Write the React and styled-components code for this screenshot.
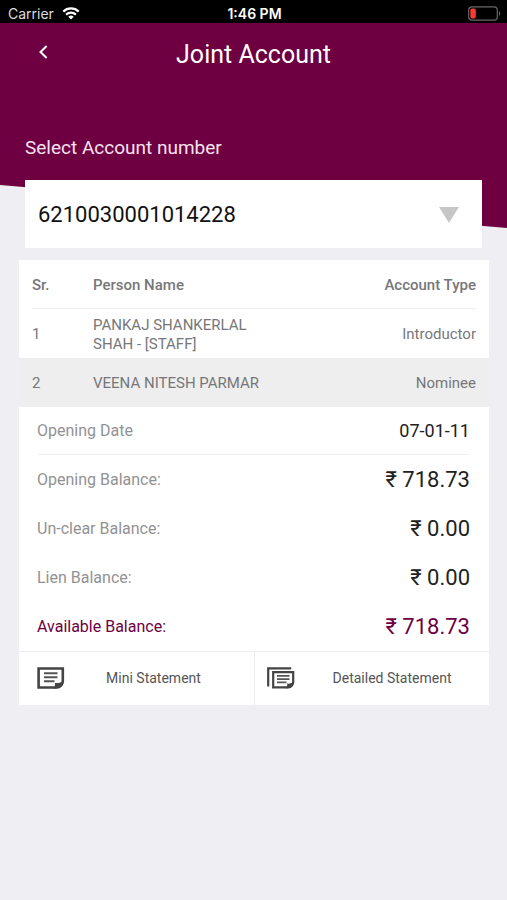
import React from "react";
import styled, { createGlobalStyle } from "styled-components";

const ACCOUNTS = ["6210030001014228"];

const HOLDERS = [
  { sr: 1, name: "PANKAJ SHANKERLAL SHAH - [STAFF]", type: "Introductor" },
  { sr: 2, name: "VEENA NITESH PARMAR", type: "Nominee" },
];

const BALANCES = [
  { label: "Opening Balance:", value: "₹ 718.73" },
  { label: "Un-clear Balance:", value: "₹ 0.00" },
  { label: "Lien Balance:", value: "₹ 0.00" },
  { label: "Available Balance:", value: "₹ 718.73", highlight: true },
];

const WifiIcon = () => (
  <svg width="18" height="13" viewBox="0 0 18 13" fill="none" stroke="#fff">
    <path d="M1.3 4.6a11 11 0 0 1 15.4 0" strokeWidth="2.2" />
    <path d="M4.1 7.6a7 7 0 0 1 9.8 0" strokeWidth="2.2" />
    <path d="M9 12.6 6.3 9.8a3.9 3.9 0 0 1 5.4 0z" fill="#fff" stroke="none" />
  </svg>
);

const BatteryIcon = () => (
  <svg width="33" height="15" viewBox="0 0 33 15" fill="none">
    <rect x="0.7" y="0.9" width="28.6" height="13.2" rx="3.4" stroke="#6b6667" strokeWidth="1.2" />
    <rect x="2.4" y="2.6" width="5.4" height="9.8" rx="1.6" fill="#fb3b30" />
    <path d="M31 5.2c1.6.6 1.6 4 0 4.6z" fill="#6b6667" />
  </svg>
);

const BackIcon = () => (
  <svg width="9" height="14" viewBox="0 0 9 14" fill="none">
    <path d="M7.6 1 1.5 7l6.1 6" stroke="#fff" strokeWidth="2" />
  </svg>
);

const MiniStatementIcon = () => (
  <svg width="28" height="22" viewBox="0 0 28 22" fill="none">
    <path d="M1.6 1.5h24.2v12.6c0 3.6-2.6 6.4-6.2 6.4h-18z" stroke="#444" strokeWidth="2.6" />
    <path d="M16 21.4c1.8-1.2 2.2-2.8 2-5.4 3.2.4 6-.2 8.6-2.8-.2 4.8-3.4 8.2-8 8.2z" fill="#444" />
    <path d="M7 6.2h13.5M7 10.2h13.5M7 14.2h10.5" stroke="#555" strokeWidth="2" />
  </svg>
);

const DetailedStatementIcon = () => (
  <svg width="28" height="22" viewBox="0 0 28 22" fill="none">
    <path d="M1.2 19.5V1.4h23" stroke="#444" strokeWidth="2.2" />
    <path d="M6.2 5.2h20v9.6c0 3.2-2 5.6-5.2 5.6H6.2z" stroke="#444" strokeWidth="2.2" />
    <path d="M18.4 21.3c1.6-1 2-2.5 1.8-4.7 2.5.3 4.8-.3 6.9-2.5-.2 4.3-2.8 7.2-6.5 7.2z" fill="#444" />
    <path d="M10 8.8h12.5M10 12.1h12.5M10 15.4h9.5" stroke="#555" strokeWidth="1.8" />
  </svg>
);

const App = () => {
  return (
    <>
      <GlobalStyle />
      <StatusBar>
        <Carrier>
          Carrier <WifiIcon />
        </Carrier>
        <Time>1:46 PM</Time>
        <Battery>
          <BatteryIcon />
        </Battery>
      </StatusBar>

      <Hero>
        <NavBar>
          <BackButton type="button" aria-label="Back">
            <BackIcon />
          </BackButton>
          <Title>Joint Account</Title>
        </NavBar>
        <AccountField>
          <FieldLabel htmlFor="account">Select Account number</FieldLabel>
          <SelectBox>
            <Select id="account">
              {ACCOUNTS.map((number) => (
                <option key={number}>{number}</option>
              ))}
            </Select>
            <Arrow width="20" height="16" viewBox="0 0 20 16">
              <path d="M0 0h20L10 16z" fill="#c6c6c6" />
            </Arrow>
          </SelectBox>
        </AccountField>
      </Hero>

      <Card>
        <Table>
          <thead>
            <HeadRow>
              <HeadCell scope="col">Sr.</HeadCell>
              <HeadCell scope="col">Person Name</HeadCell>
              <HeadCell scope="col" $right>
                Account Type
              </HeadCell>
            </HeadRow>
          </thead>
          <tbody>
            {HOLDERS.map((holder, index) => (
              <Row key={holder.sr} $shaded={index % 2 === 1}>
                <Cell>{holder.sr}</Cell>
                <Cell>{holder.name}</Cell>
                <Cell $right>{holder.type}</Cell>
              </Row>
            ))}
          </tbody>
        </Table>

        <Details>
          <DetailRow $divider>
            <DetailLabel>Opening Date</DetailLabel>
            <DateValue>07-01-11</DateValue>
          </DetailRow>
          {BALANCES.map((item) => (
            <DetailRow key={item.label} $highlight={item.highlight}>
              <DetailLabel>{item.label}</DetailLabel>
              <Amount>{item.value}</Amount>
            </DetailRow>
          ))}
        </Details>

        <Actions>
          <ActionButton type="button">
            <MiniStatementIcon />
            <ActionText>Mini Statement</ActionText>
          </ActionButton>
          <ActionButton type="button">
            <DetailedStatementIcon />
            <ActionText>Detailed Statement</ActionText>
          </ActionButton>
        </Actions>
      </Card>
    </>
  );
};

export default App;

const GlobalStyle = createGlobalStyle`
  * {
    box-sizing: border-box;
  }

  body {
    margin: 0;
    background: #efeef3;
    font-family: Roboto, "Noto Sans", sans-serif;
  }

  button,
  select {
    font-family: inherit;
  }
`;

// Phone status bar
const StatusBar = styled.div`
  display: grid;
  grid-template-columns: 1fr auto 1fr;
  align-items: center;
  height: 23px;
  padding: 4px 6px 0 8px;
  background: #000;
  color: #fff;
  font-family: Inter, sans-serif;
  font-size: 14px;
`;

const Carrier = styled.div`
  display: flex;
  align-items: center;
  gap: 8px;
  color: #ddd;
`;

const Time = styled.div`
  font-weight: 600;
`;

const Battery = styled.div`
  display: flex;
  justify-content: flex-end;
`;

// Header with the slanted lower edge
const Hero = styled.header`
  position: relative;
  padding: 0 25px;

  &::before {
    content: "";
    position: absolute;
    inset: 0 0 20px;
    z-index: -1;
    background: #6e0042;
    clip-path: polygon(0 0, 100% 0, 100% 100%, 0 79%);
  }
`;

const NavBar = styled.div`
  display: grid;
  grid-template-columns: 36px 1fr 36px;
  align-items: center;
  height: 62px;
`;

const BackButton = styled.button`
  display: flex;
  justify-content: center;
  padding: 0 0 4px;
  border: 0;
  background: none;
  cursor: pointer;
`;

const Title = styled.h1`
  margin: 0;
  color: #fff;
  font-size: 25px;
  font-weight: 400;
  text-align: center;
`;

const AccountField = styled.div`
  padding-top: 51px;
`;

const FieldLabel = styled.label`
  display: block;
  padding-bottom: 20px;
  color: #f6e3f0;
  font-size: 19px;
  line-height: 24px;
`;

const SelectBox = styled.div`
  position: relative;
`;

const Select = styled.select`
  display: block;
  width: 100%;
  height: 68px;
  padding: 0 60px 0 13px;
  border: 0;
  border-radius: 0;
  appearance: none;
  background: #fff;
  color: #111;
  font-size: 22px;
`;

const Arrow = styled.svg`
  position: absolute;
  top: 27px;
  right: 23px;
  pointer-events: none;
`;

// White card below the account picker
const Card = styled.main`
  margin: 12px 18px 0 19px;
  background: #fff;
`;

const Table = styled.table`
  display: block;
  color: #77777a;
  font-size: 15px;
  line-height: 19px;

  thead,
  tbody {
    display: block;
  }
`;

const Row = styled.tr`
  display: grid;
  grid-template-columns: 61px 4fr 5fr;
  align-items: center;
  min-height: 49px;
  padding: 2px 13px 0;
  background: ${({ $shaded }) => ($shaded ? "#eeeeee" : "transparent")};
`;

const HeadRow = styled(Row)`
  margin: 0 13px;
  padding: 2px 0 0;
  border-bottom: 1px solid #eeeeee;
`;

const Cell = styled.td`
  padding: 0;
  text-align: ${({ $right }) => ($right ? "right" : "left")};
`;

const HeadCell = styled.th`
  padding: 0;
  font-weight: 500;
  text-align: ${({ $right }) => ($right ? "right" : "left")};
`;

const Details = styled.dl`
  margin: 0;
  padding: 0 19px 0 18px;
`;

const DetailRow = styled.div`
  display: flex;
  align-items: center;
  justify-content: space-between;
  height: ${({ $divider }) => ($divider ? "48px" : "49px")};
  border-bottom: ${({ $divider }) => ($divider ? "1px solid #eeeeee" : "0")};
  color: ${({ $highlight }) => ($highlight ? "#6e0042" : "#222")};

  dt {
    color: ${({ $highlight }) => ($highlight ? "#6e0042" : "#929294")};
  }
`;

const DetailLabel = styled.dt`
  font-size: 16px;
`;

const Amount = styled.dd`
  margin: 0;
  font-size: 22px;
`;

const DateValue = styled.dd`
  margin: 0;
  font-size: 18px;
`;

const Actions = styled.div`
  display: grid;
  grid-template-columns: 1fr 1fr;
  border-top: 1px solid #eeeeee;
`;

const ActionButton = styled.button`
  display: grid;
  grid-template-columns: 28px 1fr;
  align-items: center;
  height: 53px;
  padding: 0 12px 2px 18px;
  border: 0;
  background: none;
  cursor: pointer;

  & + & {
    padding: 0 0 2px 12px;
    border-left: 1px solid #eeeeee;
  }
`;

const ActionText = styled.span`
  color: #555;
  font-size: 14px;
`;
